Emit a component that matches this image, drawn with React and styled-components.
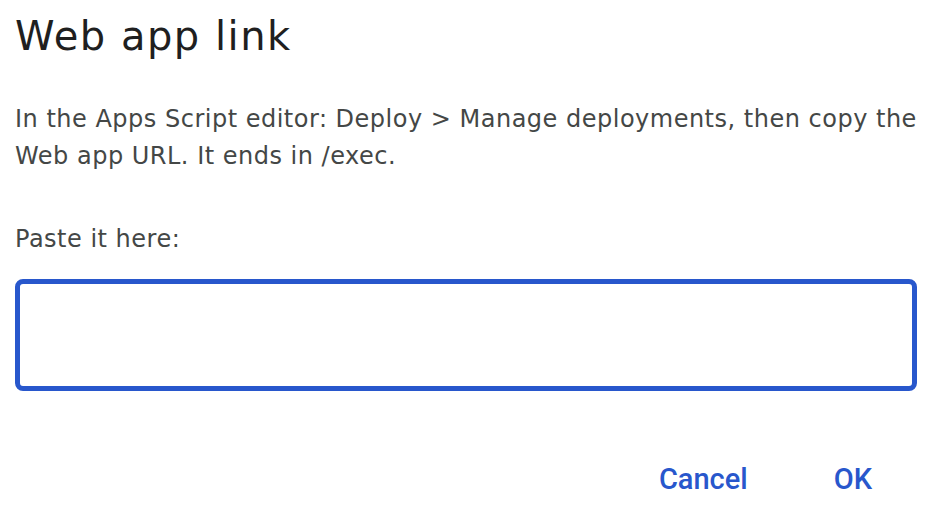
import styled, { createGlobalStyle } from "styled-components";

const GlobalStyle = createGlobalStyle`
  html, body {
    margin: 0;
    background: #fff;
  }
  body {
    font-family: "DejaVu Sans", Roboto, "Liberation Sans", Arial, sans-serif;
  }
`;

const Dialog = styled.div`
  display: flex;
  flex-direction: column;
  padding: 0 19px 0 15px;
`;

const Title = styled.h1`
  margin: 8px 0 0;
  font-size: 40px;
  line-height: 56px;
  font-weight: 400;
  letter-spacing: 1.5px;
  color: #1f1f1f;
`;

const Text = styled.p`
  margin: ${(p) => p.top || 0}px 0 0;
  font-size: 24px;
  line-height: 37px;
  letter-spacing: 0.5px;
  color: #444746;
`;

const UrlInput = styled.input`
  box-sizing: border-box;
  margin-top: 21px;
  width: 100%;
  height: 112px;
  border: 5px solid #2857cc;
  border-radius: 8px;
  outline: none;
  padding: 0 16px;
  font: inherit;
  font-size: 24px;
`;

const Actions = styled.div`
  display: flex;
  justify-content: flex-end;
  gap: 70px;
  margin-top: 70px;
  padding-right: 37px;
`;

const TextButton = styled.button`
  border: none;
  background: none;
  padding: 0 8px;
  font-family: Roboto, "Liberation Sans", Arial, sans-serif;
  font-size: 29px;
  line-height: 36px;
  font-weight: 500;
  color: #2857cc;
  cursor: pointer;
`;

export default function App() {
  return (
    <>
      <GlobalStyle />
      <Dialog>
        <Title>Web app link</Title>
        <Text top={37}>
          In the Apps Script editor: Deploy &gt; Manage deployments, then copy the
          Web app URL. It ends in /exec.
        </Text>
        <Text top={46}>Paste it here:</Text>
        <UrlInput type="text" />
        <Actions>
          <TextButton>Cancel</TextButton>
          <TextButton>OK</TextButton>
        </Actions>
      </Dialog>
    </>
  );
}
